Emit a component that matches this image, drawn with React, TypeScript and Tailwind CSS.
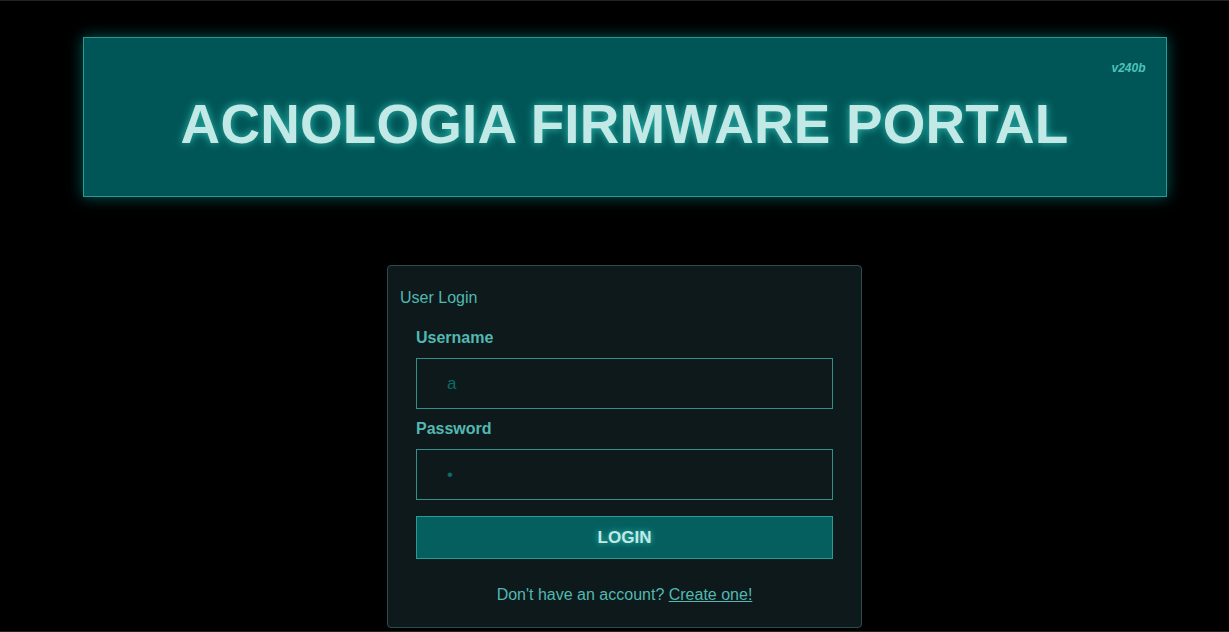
export default function App() {
  return (
    <div className="h-[632px] w-full bg-black border-t border-b border-[#242424] overflow-hidden pl-[20px] font-['Liberation_Sans',Arial,sans-serif]">
      {/* Header banner */}
      <header className="relative mx-auto mt-[36px] w-[1084px] h-[160px] bg-[#005656] border border-[#2a9a96] shadow-[0_0_14px_rgba(0,200,190,0.45)] flex items-center justify-center pt-[14px]">
        <span className="absolute right-[20px] top-[21px] text-[12px] font-bold italic text-[#4cc4bc]">v240b</span>
        <h1 className="text-[54.8px] font-bold text-[#c3e9e7] tracking-[0.2px] [text-shadow:0_0_8px_rgba(60,220,210,0.75)]">
          ACNOLOGIA FIRMWARE PORTAL
        </h1>
      </header>

      {/* Login card */}
      <div className="mx-auto mt-[68px] w-[475px] h-[363px] bg-[#0d191b] border border-[#2d4c4c] rounded-[4px] pt-[22px]">
        <div className="px-[12px] text-[16px] text-[#52b8b1] leading-[20px]">User Login</div>
        <form className="px-[28px] mt-[20px] flex flex-col" onSubmit={(e) => e.preventDefault()}>
          <label className="text-[16px] font-bold text-[#52b8b1] leading-[20px]">Username</label>
          <input
            defaultValue="a"
            className="mt-[10px] h-[51px] w-full bg-[#0d191b] border border-[#338f8c] px-[30px] text-[17px] text-[#0a6b68] outline-none"
          />
          <label className="mt-[10px] text-[16px] font-bold text-[#52b8b1] leading-[20px]">Password</label>
          <input
            type="password"
            defaultValue="a"
            className="mt-[10px] h-[51px] w-full bg-[#0d191b] border border-[#338f8c] px-[30px] text-[17px] text-[#0a6b68] outline-none"
          />
          <button
            type="submit"
            className="mt-[16px] h-[43px] w-full bg-[#055f5f] border border-[#2a9a96] text-[17px] font-bold text-[#c3e9e7] [text-shadow:0_0_6px_rgba(60,220,210,0.8)]"
          >
            LOGIN
          </button>
          <p className="mt-[24px] text-center text-[16px] text-[#52b8b1]">
            Don't have an account? <a href="#" className="underline">Create one!</a>
          </p>
        </form>
      </div>
    </div>
  );
}
